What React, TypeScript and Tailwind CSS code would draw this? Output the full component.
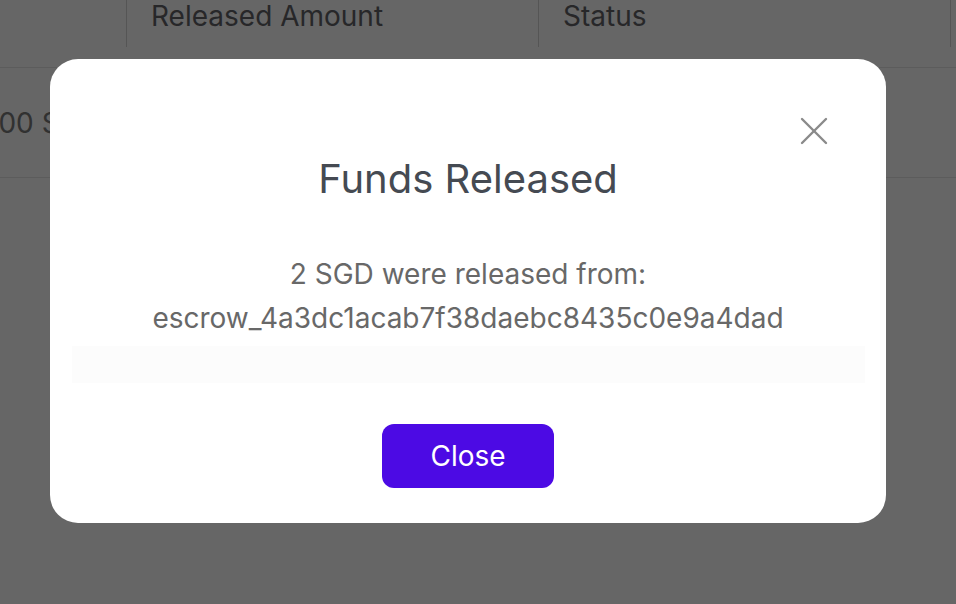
import { X } from "lucide-react";

const font = { fontFamily: "Inter, 'Noto Sans', sans-serif" };

/** Table page that sits behind the dialog */
function ReleaseTable() {
  return (
    <div className="w-full bg-white">
      {/* Header row */}
      <div className="flex h-[68px] border-b border-[#e6e6e6]">
        <div className="w-[127px] h-[47px] border-r border-[#d4d4d4]" />
        <div className="w-[412px] h-[47px] border-r border-[#d4d4d4] pl-6 text-[28px] leading-[32px] text-[#626368]">
          Released Amount
        </div>
        <div className="w-[412px] h-[47px] border-r border-[#d4d4d4] pl-6 text-[28px] leading-[32px] text-[#626368]">
          Status
        </div>
      </div>
      {/* Data row */}
      <div className="flex items-center h-[110px] border-b border-[#e6e6e6]">
        <div className="-ml-[26px] text-[28px] text-[#7a7a7a] whitespace-nowrap">2.00 SGD</div>
      </div>
    </div>
  );
}

export default function App() {
  return (
    <div className="relative w-[956px] h-[604px] overflow-hidden bg-white" style={font}>
      <ReleaseTable />

      {/* Backdrop */}
      <div className="absolute inset-0 bg-black/60">
        {/* Dialog */}
        <div className="relative mt-[59px] ml-[50px] w-[836px] h-[464px] rounded-[28px] bg-white flex flex-col items-center">
          <button className="absolute right-[48px] top-[48px] text-[#8a8a8a]">
            <X className="w-[48px] h-[48px]" strokeWidth={1.2} />
          </button>

          <h2 className="mt-[97px] text-[40px] leading-[46px] text-[#454a52]">Funds Released</h2>

          <div className="mt-[50px] flex flex-col items-center text-[28px] leading-[44px] text-[#686868]">
            <p>2 SGD were released from:</p>
            <p>escrow_4a3dc1acab7f38daebc8435c0e9a4dad</p>
          </div>

          <div className="mt-[6px] w-[793px] h-[37px] bg-[#fcfcfc]" />

          <button className="mt-[41px] w-[172px] h-[64px] rounded-[12px] bg-[#4c0ae4] text-white text-[28px]">
            Close
          </button>
        </div>
      </div>
    </div>
  );
}
